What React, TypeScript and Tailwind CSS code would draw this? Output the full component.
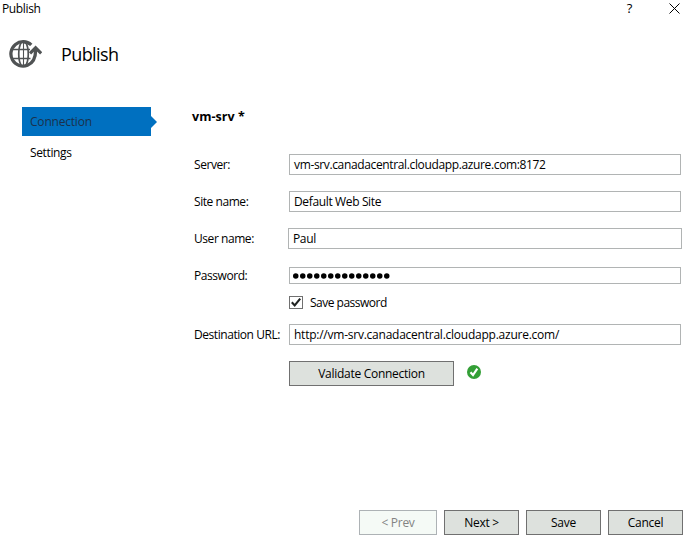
import type { ReactNode } from "react";

function Field({ label, children, className }: { label: string; children: ReactNode; className: string }) {
  return (
    <div className={`flex items-center ${className}`}>
      <span className="w-[95px] shrink-0 whitespace-nowrap tracking-[-0.44px]">{label}</span>
      {children}
    </div>
  );
}

function TextBox({ value, className = "w-[392px] h-[21px]" }: { value: string; className?: string }) {
  return (
    <div className={`flex shrink-0 items-center border border-[#b1b4b4] bg-white pl-1 whitespace-nowrap ${className}`}>
      {value}
    </div>
  );
}

function Button({ label, className = "w-[75px]" }: { label: string; className?: string }) {
  return (
    <button className={`flex h-[25px] shrink-0 items-center justify-center border border-[#707070] bg-[#dde1dd] tracking-[-0.28px] ${className}`}>
      {label}
    </button>
  );
}

function GlobeIcon() {
  return (
    <svg className="h-[30px] w-[33px]" viewBox="0 0 33 30" fill="none" stroke="#505354">
      <path d="M22.3 5.9A12.2 12.2 0 1 0 18.5 26.3Q26.8 23 26.6 11" strokeWidth="3.3" />
      <path d="M12.5 3C8.8 9 8.8 21 12.5 27M16.5 3C20.2 9 20.2 21 16.5 27M3 10.5H21M3 19.5H21.5" strokeWidth="1.7" />
      <path d="M14.5 3V27" strokeWidth="1.1" />
      <path d="M21 14.4L26.6 8.8L32.2 14.4" strokeWidth="3.2" />
    </svg>
  );
}

export default function App() {
  return (
    <div className="flex h-[537px] w-[691px] flex-col overflow-hidden bg-white font-['Open_Sans',sans-serif] text-[12px] leading-4 tracking-[-0.36px] text-black">
      <header className="flex h-[18px] items-start justify-between pl-[2px] pr-[11px]">
        <span className="mt-px">Publish</span>
        <div className="flex">
          <span className="mr-[37px] text-[13px]">?</span>
          <svg className="mt-[3px] h-[11px] w-[11px]" viewBox="0 0 11 11" stroke="#000" strokeWidth="1">
            <path d="M.5 .5L10.5 10.5M10.5 .5L.5 10.5" />
          </svg>
        </div>
      </header>
      <div className="mt-5 flex h-[32px] items-center pl-[9px]">
        <GlobeIcon />
        <h1 className="ml-[19px] text-[18px] leading-6 font-normal tracking-[-0.6px]">Publish</h1>
      </div>
      <main className="flex h-[425px] pt-[37px]">
        <nav className="w-[170px] shrink-0 pl-[22px]">
          <div className="flex h-[29px] items-center">
            <div className="flex h-full w-[129px] items-center bg-[#0070c0] pl-2 tracking-[-0.2px] text-[#1b304b]">Connection</div>
            <svg className="h-[12px] w-[6px]" viewBox="0 0 6 12"><path d="M0 0L6 6L0 12Z" fill="#0070c0" /></svg>
          </div>
          <div className="mt-[9px] pl-2">Settings</div>
        </nav>
        <section className="pl-6">
          <h2 className="-ml-[2px] mt-[2px] mb-[-1px] h-4 text-[12.5px] font-bold tracking-[0.05px]">vm-srv *</h2>
          <Field label="Server:" className="mt-[30px] h-[21px]"><TextBox value="vm-srv.canadacentral.cloudapp.azure.com:8172" /></Field>
          <Field label="Site name:" className="mt-4 h-[21px]"><TextBox value="Default Web Site" /></Field>
          <Field label="User name:" className="mt-4 h-[21px]"><TextBox value="Paul" className="-ml-px h-[21px] w-[394px]" /></Field>
          <Field label="Password:" className="mt-[18px] h-[17px]">
            <div className="flex h-[17px] w-[392px] items-center gap-[1.5px] border border-[#b1b4b4] pl-[3px] pt-px">
              {Array.from({ length: 14 }, (_, i) => (
                <svg key={i} className="h-[6px] w-[5.5px]" viewBox="0 0 5.5 6"><circle cx="2.75" cy="3" r="2.75" /></svg>
              ))}
            </div>
          </Field>
          <div className="ml-[95px] mt-3 flex h-[13px] items-center">
            <svg className="h-[13px] w-[14px]" viewBox="0 0 14 13" fill="none">
              <rect x=".5" y=".5" width="13" height="12" stroke="#707070" />
              <path d="M2.8 6.3L5.7 9.5L11.2 2.7" stroke="#202322" strokeWidth="2.1" />
            </svg>
            <span className="ml-[7px] tracking-[-0.5px]">Save password</span>
          </div>
          <Field label="Destination URL:" className="mt-[15px] h-[21px]"><TextBox value="http://vm-srv.canadacentral.cloudapp.azure.com/" className="h-[21px] w-[392px] tracking-[-0.24px]" /></Field>
          <div className="ml-[95px] mt-4 flex">
            <Button label="Validate Connection" className="w-[165px]" />
            <svg className="ml-[13px] mt-[4px] h-[14px] w-[14px]" viewBox="0 0 14 14" fill="none">
              <circle cx="7" cy="7" r="7" fill="#339f36" />
              <path d="M3.5 7.3L6 10L10.3 3.7" stroke="#fff" strokeWidth="2.2" />
            </svg>
          </div>
        </section>
      </main>
      <footer className="mt-[15px] flex justify-end gap-[7px] pr-2">
        <Button label="< Prev" className="w-[78px] border-[#adb2b5]! bg-[#f5faf6]! text-[#838383]" />
        <Button label="Next >" />
        <Button label="Save" />
        <Button label="Cancel" />
      </footer>
    </div>
  );
}
